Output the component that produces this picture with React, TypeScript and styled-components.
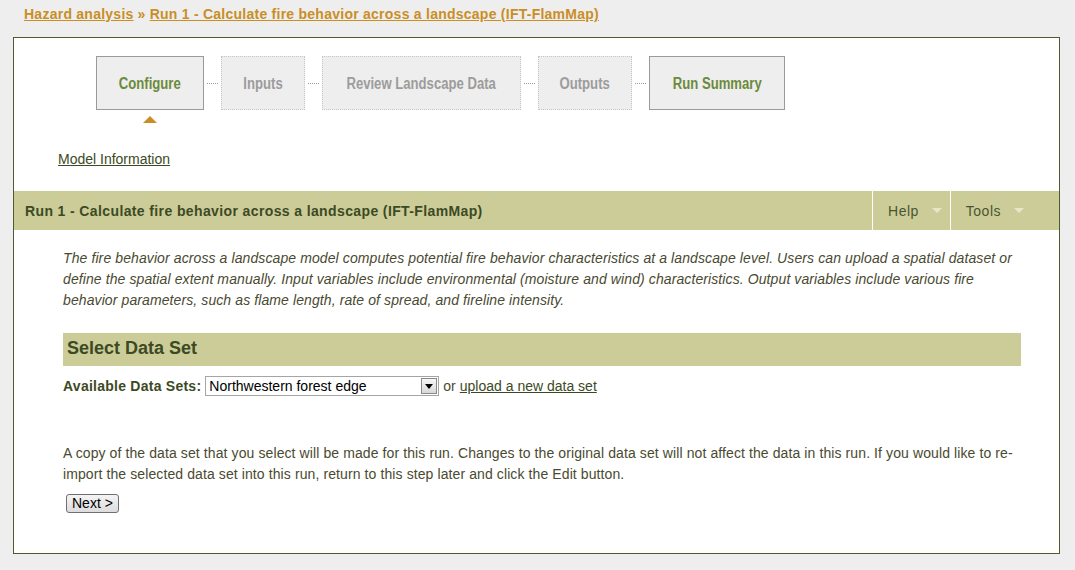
import React from "react";
import styled, { createGlobalStyle } from "styled-components";

const GlobalStyle = createGlobalStyle`
  html, body { margin: 0; padding: 0; background: #eeeeee; }
  body {
    font-family: "Liberation Sans", Arial, sans-serif;
    font-size: 14px;
    color: #4a4a30;
  }
  * { box-sizing: border-box; }
`;

const Page = styled.div`
  padding: 6px 15px 16px 13px;
`;

const Breadcrumb = styled.div`
  padding-left: 11px;
  margin-bottom: 15px;
  font-size: 14px;
  font-weight: bold;
  line-height: 16px;
  letter-spacing: 0.25px;
  color: #c98e25;
`;

const CrumbLink = styled.a`
  color: #c98e25;
  text-decoration: underline;
  cursor: pointer;
`;

const CrumbSep = styled.span`
  margin: 0 4px;
`;

const Frame = styled.div`
  background: #ffffff;
  border: 1px solid #4f5a2e;
  padding-bottom: 40px;
`;

const Steps = styled.div`
  display: flex;
  align-items: center;
  padding: 18px 0 0 82px;
`;

const StepItem = styled.div`
  position: relative;
`;

type StepState = "active" | "done" | "todo";

const StepBox = styled.div<{ $state: StepState; $width: number }>`
  width: ${(p) => p.$width}px;
  height: 54px;
  padding-top: 2px;
  display: flex;
  align-items: center;
  justify-content: center;
  background: #eeeeee;
  border: 1px ${(p) => (p.$state === "todo" ? "dotted #c6c6c6" : "solid #9a9a9a")};
  font-weight: bold;
  font-size: 16px;
  color: ${(p) => (p.$state === "todo" ? "#9c9c9c" : "#6b8a3a")};
  white-space: nowrap;
`;

const StepLabel = styled.span`
  display: inline-block;
  transform: scaleX(0.82);
`;

const Indicator = styled.span`
  position: absolute;
  left: 50%;
  top: 60px;
  margin-left: -7px;
  width: 0;
  height: 0;
  border-left: 7px solid transparent;
  border-right: 7px solid transparent;
  border-bottom: 7px solid #c98e25;
`;

const Connector = styled.span`
  width: 17px;
  display: flex;
  justify-content: center;
  &::before {
    content: "";
    width: 11px;
    border-top: 1px dotted #9a9a9a;
  }
`;

const ModelInfo = styled.div`
  margin: 41px 0 0 44px;
  font-size: 14px;
  line-height: 16px;
`;

const OliveLink = styled.a`
  color: #3c4a24;
  text-decoration: underline;
  cursor: pointer;
`;

const HeaderBar = styled.div`
  margin-top: 24px;
  height: 39px;
  background: #cccc99;
  display: flex;
  align-items: stretch;
`;

const HeaderTitle = styled.div`
  flex: 1;
  display: flex;
  align-items: center;
  padding-left: 11px;
  font-size: 14px;
  font-weight: bold;
  letter-spacing: 0.38px;
  color: #3c4a24;
`;

const Menus = styled.div`
  display: flex;
  padding-right: 27px;
`;

const MenuItem = styled.div`
  display: flex;
  align-items: center;
  gap: 13px;
  padding: 0 8px 0 15px;
  border-left: 1px solid #ffffff;
  font-size: 14px;
  letter-spacing: 0.5px;
  color: #4a5530;
`;

const MenuCaret = styled.span`
  width: 0;
  height: 0;
  border-left: 5.5px solid transparent;
  border-right: 5.5px solid transparent;
  border-top: 5px solid #e6e6cc;
`;

const Content = styled.div`
  padding: 0 38px 0 49px;
`;

const Description = styled.p`
  margin: 18px 0 0;
  font-style: italic;
  font-size: 14px;
  line-height: 21px;
  letter-spacing: 0.1px;
  color: #4a4a30;
`;

const SectionBar = styled.div`
  margin-top: 22px;
  height: 33px;
  padding: 0 0 2px 4px;
  display: flex;
  align-items: center;
  background: #cccc99;
  font-size: 18px;
  font-weight: bold;
  color: #3c4a24;
`;

const DataRow = styled.div`
  margin-top: 10px;
  display: flex;
  align-items: center;
  height: 20px;
  font-size: 14px;
`;

const FieldLabel = styled.span`
  font-weight: bold;
  letter-spacing: 0.25px;
  color: #3c4a24;
  margin-right: 4px;
`;

const SelectBox = styled.div`
  width: 234px;
  height: 20px;
  border: 1px solid #a5a5a5;
  background: #ffffff;
  display: flex;
  align-items: center;
  padding: 1px;
`;

const SelectValue = styled.span`
  flex: 1;
  padding-left: 2px;
  color: #000000;
  font-size: 14px;
  line-height: 16px;
`;

const SelectArrow = styled.span`
  width: 16px;
  height: 16px;
  border: 1px solid #8a8a8a;
  background: linear-gradient(#f6f6f6, #d8d8d8);
  display: flex;
  align-items: center;
  justify-content: center;
  &::before {
    content: "";
    width: 0;
    height: 0;
    border-left: 4px solid transparent;
    border-right: 4px solid transparent;
    border-top: 5px solid #000000;
  }
`;

const OrText = styled.span`
  margin: 0 4px;
  color: #4a4a30;
`;

const CopyText = styled.p`
  margin: 47px 0 0;
  font-size: 14px;
  line-height: 21px;
  letter-spacing: 0.1px;
  color: #4a4a30;
`;

const NextButton = styled.button`
  margin: 9px 0 0 3px;
  height: 19px;
  padding: 0 5px;
  font-family: "Liberation Sans", Arial, sans-serif;
  font-size: 14px;
  line-height: 15px;
  color: #000000;
  background: linear-gradient(#f4f4f4, #dcdcdc);
  border: 1px solid #707070;
  border-radius: 3px;
  cursor: pointer;
`;

const steps: { label: string; state: StepState; width: number }[] = [
  { label: "Configure", state: "active", width: 108 },
  { label: "Inputs", state: "todo", width: 84 },
  { label: "Review Landscape Data", state: "todo", width: 199 },
  { label: "Outputs", state: "todo", width: 94 },
  { label: "Run Summary", state: "done", width: 136 },
];

export default function App() {
  return (
    <>
      <GlobalStyle />
      <Page>
        <Breadcrumb>
          <CrumbLink>Hazard analysis</CrumbLink>
          <CrumbSep>»</CrumbSep>
          <CrumbLink>Run 1 - Calculate fire behavior across a landscape (IFT-FlamMap)</CrumbLink>
        </Breadcrumb>
        <Frame>
          <Steps>
            {steps.map((s, i) => (
              <React.Fragment key={s.label}>
                {i > 0 && <Connector />}
                <StepItem>
                  <StepBox $state={s.state} $width={s.width}>
                    <StepLabel>{s.label}</StepLabel>
                  </StepBox>
                  {s.state === "active" && <Indicator />}
                </StepItem>
              </React.Fragment>
            ))}
          </Steps>
          <ModelInfo>
            <OliveLink>Model Information</OliveLink>
          </ModelInfo>
          <HeaderBar>
            <HeaderTitle>Run 1 - Calculate fire behavior across a landscape (IFT-FlamMap)</HeaderTitle>
            <Menus>
              <MenuItem>
                Help
                <MenuCaret />
              </MenuItem>
              <MenuItem>
                Tools
                <MenuCaret />
              </MenuItem>
            </Menus>
          </HeaderBar>
          <Content>
            <Description>
              The fire behavior across a landscape model computes potential fire behavior characteristics at a
              landscape level. Users can upload a spatial dataset or define the spatial extent manually. Input
              variables include environmental (moisture and wind) characteristics. Output variables include various
              fire behavior parameters, such as flame length, rate of spread, and fireline intensity.
            </Description>
            <SectionBar>Select Data Set</SectionBar>
            <DataRow>
              <FieldLabel>Available Data Sets:</FieldLabel>
              <SelectBox>
                <SelectValue>Northwestern forest edge</SelectValue>
                <SelectArrow />
              </SelectBox>
              <OrText>or</OrText>
              <OliveLink>upload a new data set</OliveLink>
            </DataRow>
            <CopyText>
              A copy of the data set that you select will be made for this run. Changes to the original data set
              will not affect the data in this run. If you would like to re-import the selected data set into this
              run, return to this step later and click the Edit button.
            </CopyText>
            <NextButton>Next &gt;</NextButton>
          </Content>
        </Frame>
      </Page>
    </>
  );
}
